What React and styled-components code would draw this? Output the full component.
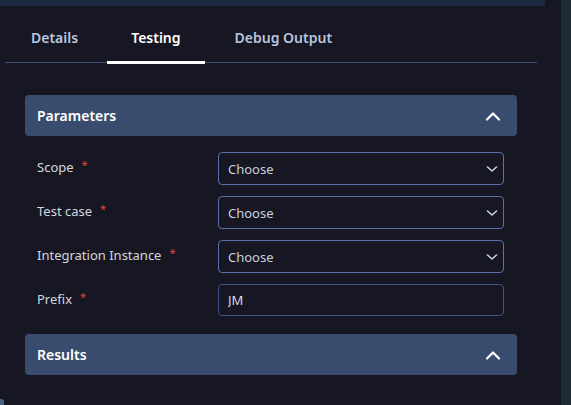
import React, { useState } from 'react'
import styled, { createGlobalStyle } from 'styled-components'

const GlobalStyle = createGlobalStyle`
body {
    margin: 0;
    background: #171723;
    font-family: "Noto Sans", "Open Sans", sans-serif;
    overflow: hidden;
}
`

const ChevronUp = () => (
    <svg width="16" height="10" viewBox="0 0 16 10" fill="none">
        <path d="M2 8.5 L8 2.5 L14 8.5" stroke="#fff" strokeWidth="2.2" strokeLinecap="round" strokeLinejoin="round" />
    </svg>
)

const ChevronDown = () => (
    <svg width="12" height="8" viewBox="0 0 12 8" fill="none">
        <path d="M1.5 2 L6 6 L10.5 2" stroke="#c9d2e6" strokeWidth="1.6" strokeLinecap="round" strokeLinejoin="round" />
    </svg>
)

const fields = [
    { label: 'Scope', type: 'select' },
    { label: 'Test case', type: 'select' },
    { label: 'Integration Instance', type: 'select' },
    { label: 'Prefix', type: 'input', value: 'JM' },
]

const tabs = ['Details', 'Testing', 'Debug Output']

const App = () => {
    const [active, setActive] = useState('Testing')

    return (
        <Page>
            <GlobalStyle />
            <Main>
                <TopBar />
                <TabList>
                    {tabs.map(t => (
                        <Tab key={t} $active={t === active} onClick={() => setActive(t)}>{t}</Tab>
                    ))}
                </TabList>
                <Content>
                    <Section>
                        <SectionHeader>
                            <span>Parameters</span>
                            <ChevronUp />
                        </SectionHeader>
                        <Fields>
                            {fields.map(f => (
                                <Row key={f.label}>
                                    <Label>{f.label}<Required>*</Required></Label>
                                    {f.type === 'select' ? (
                                        <Select>
                                            <span>Choose</span>
                                            <ChevronDown />
                                        </Select>
                                    ) : (
                                        <Input defaultValue={f.value} />
                                    )}
                                </Row>
                            ))}
                        </Fields>
                    </Section>
                    <SectionHeader>
                        <span>Results</span>
                        <ChevronUp />
                    </SectionHeader>
                </Content>
            </Main>
            <SideStrip />
            <ScrollThumb />
        </Page>
    )
}

export default App

const Page = styled.div`
display: flex;
height: 405px;
`
const Main = styled.div`
width: 545px;
display: flex;
flex-direction: column;
`
const TopBar = styled.div`
height: 6px;
background: #1e2a44;
`
const TabList = styled.div`
display: flex;
margin: 0 8px 0 5px;
padding-left: 3px;
height: 56px;
border-bottom: 1px solid #3a4c70;
`
const Tab = styled.div`
position: relative;
padding: 22px 23px 0;
margin-right: 8px;
line-height: 20px;
font-size: 14px;
font-weight: 600;
color: ${({ $active }) => $active ? '#ffffff' : '#b8c6de'};
cursor: pointer;
&:first-child {
    margin-right: 7px;
}
&:after {
    content: '';
    display: ${({ $active }) => $active ? 'block' : 'none'};
    position: absolute;
    left: -1px;
    right: -1px;
    bottom: -2px;
    height: 3px;
    background: #ffffff;
}
`
const Content = styled.div`
padding: 32px 28px 0 25px;
display: flex;
flex-direction: column;
`
const Section = styled.div`
display: flex;
flex-direction: column;
margin-bottom: 18px;
`
const SectionHeader = styled.div`
height: 41px;
display: flex;
align-items: center;
justify-content: space-between;
padding: 0 16px 0 12px;
background: #3a4c6d;
border-radius: 4px;
color: #ffffff;
font-size: 14px;
font-weight: 600;
`
const Fields = styled.div`
display: flex;
flex-direction: column;
gap: 11px;
padding: 16px 13px 0 12px;
`
const Row = styled.div`
display: flex;
align-items: center;
justify-content: space-between;
`
const Label = styled.label`
font-size: 13px;
color: #d3d7df;
display: flex;
align-items: flex-start;
margin-bottom: 3px;
`
const Required = styled.span`
color: #e5453f;
font-size: 11px;
margin-left: 8px;
line-height: 14px;
`
const Select = styled.div`
box-sizing: border-box;
width: 286px;
height: 33px;
display: flex;
align-items: center;
justify-content: space-between;
padding: 0 5px 0 9px;
border: 1px solid #5872a8;
border-radius: 4px;
font-size: 13px;
color: #c9d0de;
`
const Input = styled.input`
box-sizing: border-box;
width: 286px;
height: 32px;
padding: 0 9px;
background: #171723;
border: 1px solid #3e5283;
border-radius: 4px;
font-family: "Noto Sans", sans-serif;
font-size: 13px;
color: #d6dbe5;
outline: none;
`
const SideStrip = styled.div`
margin-left: 16px;
flex: 1;
background: #1f2b33;
`
const ScrollThumb = styled.div`
position: fixed;
left: 0;
bottom: 0;
width: 4px;
height: 6px;
background: #4a5f85;
border-top-right-radius: 3px;
`
